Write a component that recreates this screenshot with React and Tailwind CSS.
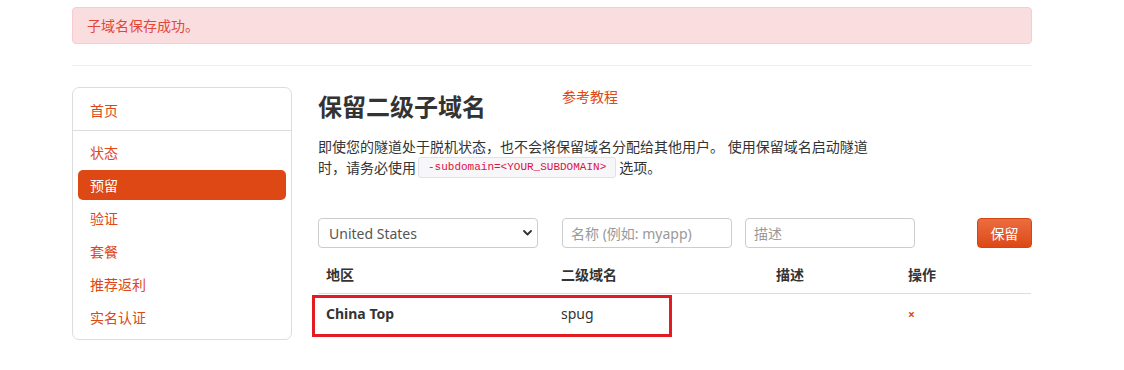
import { useState } from 'react';

const navItems = ['状态', '预留', '验证', '套餐', '推荐返利', '实名认证'];

function ChevronDown() {
  return (
    <svg width="9" height="6" viewBox="0 0 9 6" fill="none">
      <path d="M1 1l3.5 3.5L8 1" stroke="#333" strokeWidth="1.8" strokeLinecap="round" strokeLinejoin="round" />
    </svg>
  );
}

export default function App() {
  const [region, setRegion] = useState('us');

  return (
    <div
      className="w-[1124px] h-[370px] bg-white text-[14px] text-[#333] overflow-hidden"
      style={{ fontFamily: '"Noto Sans", "Noto Sans CJK SC", sans-serif' }}
    >
      <div className="ml-[72px] w-[960px] pt-[7px]">
        <div className="h-[37px] flex items-center px-[14px] bg-[#fadedf] border border-[#f6cccf] rounded-[4px] text-[#e2463a]">
          子域名保存成功。
        </div>
        <div className="mt-[21px] h-px bg-[#eeeeee]" />

        <div className="flex mt-[21px]">
          {/* sidebar */}
          <div className="w-[220px] h-[253px] border border-[#dddddd] rounded-[7px] px-[5px] pt-[7px]">
            <a className="h-[30px] flex items-center pl-[12px] text-[#dd4814]">首页</a>
            <div className="mt-[5px] -mx-[5px] h-px bg-[#dddddd]" />
            <div className="mt-[6px] flex flex-col gap-[3px]">
              {navItems.map((item) => (
                <a
                  key={item}
                  className={
                    item === '预留'
                      ? 'h-[30px] flex items-center pl-[12px] rounded-[5px] bg-[#dd4814] text-white'
                      : 'h-[30px] flex items-center pl-[12px] text-[#dd4814]'
                  }
                >
                  {item}
                </a>
              ))}
            </div>
          </div>

          {/* main */}
          <div className="ml-[26px] w-[714px] pt-[3px]">
            <div className="flex items-start">
              <h2 className="text-[24px] leading-[34px] font-bold text-[#333]">保留二级子域名</h2>
              <a className="ml-[76px] text-[14px] leading-[14px] text-[#dd4814]">参考教程</a>
            </div>

            <p className="mt-[12px] w-[556px] leading-[21px] text-[#333]">
              即使您的隧道处于脱机状态，也不会将保留域名分配给其他用户。 使用保留域名启动隧道时，请务必使用
              <code
                className="inline-block align-top h-[21px] leading-[19px] px-[9px] ml-[2px] mr-[3px] border border-[#e1e1e8] rounded-[3px] bg-[#f7f7f9] text-[#dd1144] text-[11px]"
                style={{ fontFamily: '"Liberation Mono", monospace' }}
              >
                -subdomain=&lt;YOUR_SUBDOMAIN&gt;
              </code>
              选项。
            </p>

            <div className="mt-[40px] flex items-center h-[30px]">
              <div className="relative w-[220px] h-[30px]">
                <select
                  value={region}
                  onChange={(e) => setRegion(e.target.value)}
                  className="appearance-none w-full h-full pl-[10px] pr-[24px] border border-[#cccccc] rounded-[4px] bg-white text-[#555] text-[14px] outline-none"
                >
                  <option value="us">United States</option>
                  <option value="cn">China Top</option>
                </select>
                <span className="absolute right-[6px] top-[12px] pointer-events-none">
                  <ChevronDown />
                </span>
              </div>
              <input
                placeholder="名称 (例如: myapp)"
                className="ml-[24px] w-[170px] h-[30px] px-[8px] border border-[#cccccc] rounded-[4px] text-[14px] placeholder:text-[#999] outline-none"
              />
              <input
                placeholder="描述"
                className="ml-[13px] w-[170px] h-[30px] px-[8px] border border-[#cccccc] rounded-[4px] text-[14px] placeholder:text-[#999] outline-none"
              />
              <button className="ml-auto w-[55px] h-[30px] rounded-[4px] bg-gradient-to-b from-[#eb6d3f] to-[#dd4814] border border-[#d4450f] text-white text-[14px]">
                保留
              </button>
            </div>

            <div className="relative mt-[8px] w-[713px]">
              <div className="grid grid-cols-[235px_215px_132px_131px] h-[38px] items-center border-b border-[#dddddd] font-bold">
                <div className="px-[8px]">地区</div>
                <div className="px-[8px]">二级域名</div>
                <div className="px-[8px]">描述</div>
                <div className="px-[8px]">操作</div>
              </div>
              <div className="grid grid-cols-[235px_215px_132px_131px] h-[38px] items-center">
                <div className="px-[8px] font-bold">China Top</div>
                <div className="px-[8px]">spug</div>
                <div className="px-[8px]" />
                <div className="px-[8px]">
                  <a className="text-[12px] font-bold text-[#dd4814] leading-none">×</a>
                </div>
              </div>
              <div className="absolute left-[-6px] top-[39px] w-[360px] h-[42px] border-[3px] border-[#e31b23] pointer-events-none" />
            </div>
          </div>
        </div>
      </div>
    </div>
  );
}
